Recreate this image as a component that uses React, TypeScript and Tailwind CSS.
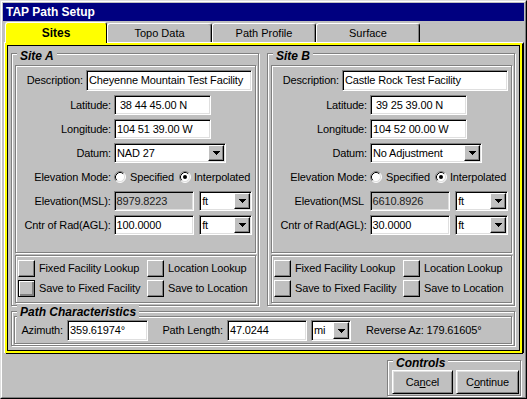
import React from "react";

const raised =
  "border border-t-white border-l-white border-r-black border-b-black shadow-[inset_-1px_-1px_0_#808080]";
const button =
  "border border-t-white border-l-white border-r-black border-b-black shadow-[inset_1px_1px_0_#dfdfdf,inset_-1px_-1px_0_#808080]";
const sunken =
  "border border-t-[#808080] border-l-[#808080] border-r-white border-b-white shadow-[inset_1px_1px_0_#000,inset_-1px_-1px_0_#dfdfdf]";
const etched = "border border-[#808080] shadow-[inset_1px_1px_0_#fff,1px_1px_0_#fff]";

type Site = {
  title: string;
  desc: string;
  lat: string;
  lon: string;
  datum: string;
  elevLabel: string;
  elev: string;
  cntr: string;
  defaultSave?: boolean;
};

const sites: Site[] = [
  {
    title: "Site A",
    desc: "Cheyenne Mountain Test Facility",
    lat: " 38 44 45.00 N",
    lon: "104 51 39.00 W",
    datum: "NAD 27",
    elevLabel: "Elevation(MSL):",
    elev: "8979.8223",
    cntr: "100.0000",
    defaultSave: true,
  },
  {
    title: "Site B",
    desc: "Castle Rock Test Facility",
    lat: " 39 25 39.00 N",
    lon: "104 52 00.00 W",
    datum: "No Adjustment",
    elevLabel: "Elevation(MSL ",
    elev: "6610.8926",
    cntr: "30.0000",
  },
];

function Arrow() {
  return (
    <svg width="7" height="4" viewBox="0 0 7 4" shapeRendering="crispEdges">
      <path d="M0 0h7v1H0zM1 1h5v1H1zM2 2h3v1H2zM3 3h1v1H3z" fill="#000" />
    </svg>
  );
}

function Radio({ on }: { on?: boolean }) {
  return (
    <svg width="12" height="12" viewBox="0 0 12 12" className="shrink-0">
      <circle cx="6" cy="6" r="5" fill="#fff" />
      <path d="M2.11 9.89A5.5 5.5 0 0 1 9.89 2.11" fill="none" stroke="#808080" />
      <path d="M9.89 2.11A5.5 5.5 0 0 1 2.11 9.89" fill="none" stroke="#fff" />
      <path d="M2.82 9.18A4.5 4.5 0 0 1 9.18 2.82" fill="none" stroke="#000" />
      <path d="M9.18 2.82A4.5 4.5 0 0 1 2.82 9.18" fill="none" stroke="#dfdfdf" />
      {on && <circle cx="6" cy="6" r="2" fill="#000" />}
    </svg>
  );
}

function Field({ w, value, gray }: { w: string; value: string; gray?: boolean }) {
  return (
    <div
      className={`${sunken} ${w} h-full flex items-center pl-[2px] whitespace-pre overflow-hidden ${
        gray ? "bg-[#c0c0c0] text-[#202020]" : "bg-white"
      }`}
    >
      {value}
    </div>
  );
}

function Select({ w, value }: { w: string; value: string }) {
  return (
    <div className={`${sunken} ${w} h-full bg-white flex p-[1px]`}>
      <span className="flex-1 flex items-center pl-[1px] whitespace-pre">{value}</span>
      <span className={`${raised} w-[16px] bg-[#c0c0c0] flex items-center justify-center`}>
        <Arrow />
      </span>
    </div>
  );
}

function Row({ label, children }: { label: string; children: React.ReactNode }) {
  return (
    <div className="flex items-center h-[20px] mt-[4px]">
      <span className="w-[95px] mr-[3px] text-right whitespace-pre">{label}</span>
      {children}
    </div>
  );
}

function Lookup({ label, isDefault }: { label: string; isDefault?: boolean }) {
  return (
    <div className="flex items-center gap-[4px] h-[17px]">
      <span
        className={`w-[17px] h-[17px] ${
          isDefault
            ? "border border-black shadow-[inset_1px_1px_0_#fff,inset_-1px_-1px_0_#808080,inset_-2px_-2px_0_#808080]"
            : raised
        }`}
      />
      <span>{label}</span>
    </div>
  );
}

function Legend({ text, top }: { text: string; top: string }) {
  return (
    <span
      className={`absolute ${top} left-[5px] px-[3px] bg-[#c0c0c0] font-bold italic text-[12px] leading-[14px] tracking-normal`}
    >
      {text}
    </span>
  );
}

function SiteGroup({ s }: { s: Site }) {
  return (
    <div className={`relative ${etched} w-[248px] h-[253px] pt-[11px] pl-[3px] pr-[2px] flex flex-col`}>
      <Legend text={s.title} top="top-[-5px]" />
      <div className={`${etched} h-[188px] pt-[4px] pr-[3px] flex flex-col`}>
        <div className="flex items-center h-[21px]">
          <span className="w-[67px] mr-[3px] text-right">Description:</span>
          <Field w="flex-1" value={s.desc} />
        </div>
        <Row label="Latitude:">
          <Field w="w-[97px]" value={s.lat} />
        </Row>
        <Row label="Longitude:">
          <Field w="w-[97px]" value={s.lon} />
        </Row>
        <Row label="Datum:">
          <Select w="w-[112px]" value={s.datum} />
        </Row>
        <Row label="Elevation Mode:">
          <Radio />
          <span className="ml-[4px]">Specified</span>
          <span className="ml-[5px] flex">
            <Radio on />
          </span>
          <span className="ml-[3px]">Interpolated</span>
        </Row>
        <Row label={s.elevLabel}>
          <Field w="w-[81px]" value={s.elev} gray />
          <span className="w-[5px]" />
          <Select w="w-[53px]" value="ft" />
        </Row>
        <Row label="Cntr of Rad(AGL):">
          <Field w="w-[81px]" value={s.cntr} />
          <span className="w-[5px]" />
          <Select w="w-[53px]" value="ft" />
        </Row>
      </div>
      <div className={`${etched} mt-[2px] h-[48px] pt-[4px] pl-[2px] grid grid-cols-[129px_1fr] gap-y-[3px] content-start`}>
        <Lookup label="Fixed Facility Lookup" />
        <Lookup label="Location Lookup" />
        <Lookup label="Save to Fixed Facility" isDefault={s.defaultSave} />
        <Lookup label="Save to Location" />
      </div>
    </div>
  );
}

export default function App() {
  return (
    <div className="w-[527px] h-[399px] bg-[#c0c0c0] border border-t-[#dfdfdf] border-l-[#dfdfdf] border-r-black border-b-black text-black text-[11px] leading-none tracking-[-0.15px] font-['Liberation_Sans',Arial,sans-serif]">
      <div className="h-full border border-t-white border-l-white border-r-[#808080] border-b-[#808080] p-[1px] flex flex-col">
        <div className="h-[18px] bg-[#000080] text-white font-bold text-[12px] tracking-normal flex items-center pl-[3px]">
          TAP Path Setup
        </div>

        <div className="mt-[1px] ml-[2px] h-[20px] flex items-start relative z-10">
          <div className="w-[102px] h-[21px] bg-[#ffff00] border-t border-l border-white border-r border-r-black rounded-t-[3px] font-bold text-[12px] tracking-normal flex items-center justify-center">
            Sites
          </div>
          {["Topo Data", "Path Profile", "Surface"].map((t, i) => (
            <div
              key={t}
              className={`${i === 0 ? "w-[105px]" : "w-[104px]"} mt-[1px] h-[19px] border-t border-l border-white border-r border-r-black shadow-[inset_-1px_0_0_#808080] rounded-t-[3px] flex items-center justify-center tracking-normal`}
            >
              {t}
            </div>
          ))}
        </div>

        <div className="ml-[1px] w-[520px] h-[311px] border-t border-l border-white border-r border-r-black shadow-[inset_-1px_0_0_#808080]">
          <div className="w-[517px] h-[310px] border-2 border-[#ffff00] shadow-[inset_0_0_0_1px_#000,1px_1px_0_#000] pt-[8px] pl-[4px] pr-[5px] flex flex-col">
            <div className="flex gap-[8px] h-[253px]">
              {sites.map((s) => (
                <SiteGroup key={s.title} s={s} />
              ))}
            </div>

            <div className={`relative ${etched} mt-[5px] h-[35px] pt-[4px] px-[2px]`}>
              <Legend text="Path Characteristics" top="top-[-7px]" />
              <div className={`${etched} h-[28px] pt-[3px]`}>
                <div className="flex items-center h-[21px]">
                  <span className="w-[48px] text-right">Azimuth:</span>
                  <span className="w-[4px]" />
                  <Field w="w-[81px]" value="359.61974°" />
                  <span className="w-[75px] text-right">Path Length:</span>
                  <span className="w-[4px]" />
                  <Field w="w-[80px]" value="47.0244" />
                  <span className="w-[4px]" />
                  <Select w="w-[40px]" value="mi" />
                  <span className="ml-[15px]">Reverse Az: 179.61605°</span>
                </div>
              </div>
            </div>
          </div>
        </div>

        <div className="mt-[7px] flex justify-end pr-[3px]">
          <div className={`relative ${etched} w-[134px] h-[36px] pt-[9px] pl-[4px] flex gap-[3px]`}>
            <Legend text="Controls" top="top-[-5px]" />
            <div className={`${button} w-[61px] h-[24px] flex items-center justify-center`}>
              Ca<span className="underline">n</span>cel
            </div>
            <div className={`${button} w-[63px] h-[24px] flex items-center justify-center`}>
              C<span className="underline">o</span>ntinue
            </div>
          </div>
        </div>
      </div>
    </div>
  );
}
